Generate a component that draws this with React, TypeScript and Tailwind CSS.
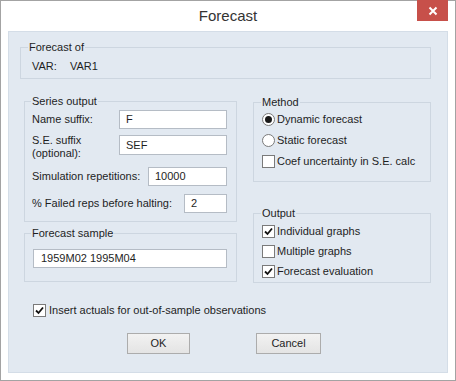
import React from 'react';

const font = { fontFamily: '"Liberation Sans", Arial, sans-serif' };

function Group({ label, className, children }: { label: string; className?: string; children: React.ReactNode }) {
  return (
    <fieldset className={`border border-[#cdd6e0] px-[7px] ${className ?? ''}`}>
      <legend className="-ml-px px-px leading-[14px]">{label}</legend>
      {children}
    </fieldset>
  );
}

function TextBox({ value, className }: { value: string; className?: string }) {
  return (
    <div className={`h-[19px] bg-white border border-[#b5bcc5] pl-[6px] flex items-center ${className ?? ''}`}>
      {value}
    </div>
  );
}

function Check({ checked }: { checked?: boolean }) {
  return (
    <span className="w-[13px] h-[13px] shrink-0 bg-white border border-[#7a7a7a] flex items-center justify-center">
      {checked && (
        <svg width="9" height="9" viewBox="0 0 9 9">
          <path d="M1 4.5 L3.5 7 L8 1.5" fill="none" stroke="#111" strokeWidth="1.8" />
        </svg>
      )}
    </span>
  );
}

function Radio({ checked }: { checked?: boolean }) {
  return (
    <span className="w-[13px] h-[13px] shrink-0 rounded-full bg-white border border-[#7a7a7a] flex items-center justify-center">
      {checked && <span className="w-[7px] h-[7px] rounded-full bg-[#1a1a1a]" />}
    </span>
  );
}

function Option({ children, text }: { children: React.ReactNode; text: string }) {
  return (
    <div className="h-[21px] flex items-center gap-[2px]">
      {children}
      <span>{text}</span>
    </div>
  );
}

export default function App() {
  return (
    <div className="w-[456px] h-[381px] bg-white border border-[#a3a3a3] flex flex-col text-[11px] text-[#1e1e1e]" style={font}>
      {/* title bar */}
      <div className="h-[30px] relative flex items-center justify-center">
        <span className="text-[15px] text-[#333] pt-px">Forecast</span>
        <div className="absolute -top-px right-[7px] w-[31px] h-[21px] bg-[#c7504a] flex items-center justify-center">
          <svg width="10" height="10" viewBox="0 0 10 10">
            <path d="M1.5 1.5 L8.5 8.5 M8.5 1.5 L1.5 8.5" stroke="#fff" strokeWidth="2" />
          </svg>
        </div>
      </div>

      {/* body */}
      <div className="mx-[7px] h-[342px] bg-[#e2e9f1] border border-[#d4dde7] flex flex-col">
        <Group label="Forecast of" className="mt-[8px] ml-[11px] w-[411px] px-[8px] pb-[5px]">
          <div className="mt-[5px] flex leading-[14px]">
            <span className="ml-[3px] w-[38px]">VAR:</span>
            <span>VAR1</span>
          </div>
        </Group>

        <div className="mt-[15px] ml-[15px] grid grid-cols-[213px_178px] gap-x-[16px] items-start">
          {/* left column */}
          <div className="flex flex-col">
            <Group label="Series output" className="pb-[8px] pr-[9px]">
              <div className="mt-[2px] flex items-center justify-between">
                <span>Name suffix:</span>
                <TextBox value="F" className="w-[108px]" />
              </div>
              <div className="mt-[5px] flex items-start justify-between">
                <div className="flex flex-col leading-[13px]">
                  <span>S.E. suffix</span>
                  <span>(optional):</span>
                </div>
                <TextBox value="SEF" className="w-[108px] h-[20px] mt-px" />
              </div>
              <div className="mt-[7px] flex items-center justify-between">
                <span>Simulation repetitions:</span>
                <TextBox value="10000" className="w-[79px]" />
              </div>
              <div className="mt-[8px] flex items-center justify-between">
                <span>% Failed reps before halting:</span>
                <TextBox value="2" className="w-[43px]" />
              </div>
            </Group>
            <Group label="Forecast sample" className="mt-[4px] pb-[13px] pr-[9px]">
              <TextBox value="1959M02 1995M04" className="mt-[9px] ml-px pl-[7px]" />
            </Group>
          </div>

          {/* right column */}
          <div className="flex flex-col mt-px">
            <Group label="Method" className="pb-[9px] pl-[8px]">
              <Option text="Dynamic forecast"><Radio checked /></Option>
              <Option text="Static forecast"><Radio /></Option>
              <Option text="Coef uncertainty in S.E. calc"><Check /></Option>
            </Group>
            <Group label="Output" className="mt-[24px] pb-px pl-[8px]">
              <div className="mt-px flex flex-col">
                <div className="h-[20px] flex items-center gap-[2px]"><Check checked /><span>Individual graphs</span></div>
                <div className="h-[20px] flex items-center gap-[2px]"><Check /><span>Multiple graphs</span></div>
                <div className="h-[20px] flex items-center gap-[2px]"><Check checked /><span>Forecast evaluation</span></div>
              </div>
            </Group>
          </div>
        </div>

        <div className="mt-[20px] ml-[24px] h-[14px] flex items-center gap-[3px]">
          <Check checked />
          <span>Insert actuals for out-of-sample observations</span>
        </div>

        <div className="mt-[16px] ml-[118px] flex gap-[66px]">
          <button className="w-[63px] h-[21px] border border-[#acacac] bg-gradient-to-b from-[#f2f2f2] to-[#e4e4e4] flex items-center justify-center">OK</button>
          <button className="w-[65px] h-[21px] border border-[#acacac] bg-gradient-to-b from-[#f2f2f2] to-[#e4e4e4] flex items-center justify-center">Cancel</button>
        </div>
      </div>
    </div>
  );
}
